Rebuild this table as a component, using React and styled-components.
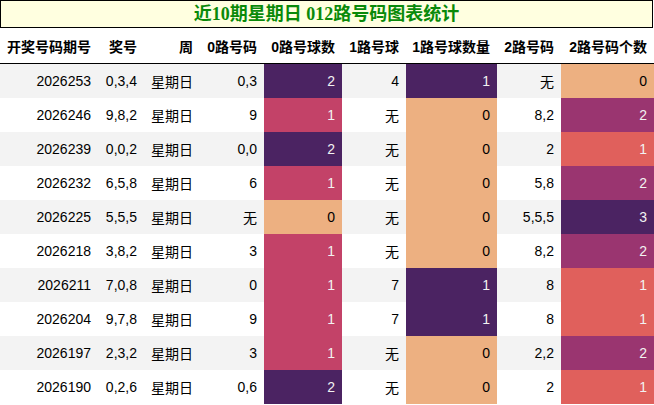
import React from 'react';
import styled, { createGlobalStyle } from 'styled-components';

const GlobalStyle = createGlobalStyle`
  html, body {
    margin: 0;
    padding: 0;
    background: #fff;
  }
  body {
    font-family: 'Liberation Sans', 'Noto Sans CJK SC', sans-serif;
    font-size: 14px;
    color: #000;
  }
`;

const COLUMNS = '98px 46px 56px 64px 78px 64px 91px 64px 93px';

// flare-like ramp, light orange -> dark purple
const RAMP = {
  0: '#edb081',
  0.33: '#e0605c',
  0.5: '#c34268',
  0.67: '#9a3570',
  1: '#4b2362',
};

const shade = (value, max) => {
  const t = Math.round((value / max) * 100) / 100;
  return RAMP[t];
};

const Page = styled.div`
  width: 654px;
  height: 405px;
  overflow: hidden;
`;

const Title = styled.div`
  box-sizing: border-box;
  width: 653px;
  height: 28px;
  border: 1px solid #000;
  background: #ffffe0;
  color: #0a8a0a;
  font-family: 'Liberation Serif', 'Noto Sans CJK SC', serif;
  font-weight: bold;
  font-size: 18px;
  line-height: 26px;
  text-align: center;
`;

const Row = styled.div`
  display: grid;
  grid-template-columns: ${COLUMNS};
  height: ${(props) => (props.head ? '35px' : '34px')};
  background: ${(props) => (props.striped ? '#f3f3f3' : '#fff')};
  border-bottom: ${(props) => (props.head ? '1px solid #000' : 'none')};
  font-weight: ${(props) => (props.head ? 'bold' : 'normal')};
`;

const Cell = styled.div`
  display: flex;
  align-items: center;
  justify-content: flex-end;
  padding: 0 7px;
  white-space: nowrap;
  background: ${(props) => props.bg || 'transparent'};
  color: ${(props) => (props.light ? '#f2f2f2' : '#000')};
`;

const HEADERS = [
  '开奖号码期号',
  '奖号',
  '周',
  '0路号码',
  '0路号球数',
  '1路号球',
  '1路号球数量',
  '2路号码',
  '2路号码个数',
];

const ROWS = [
  ['2026253', '0,3,4', '0,3', 2, '4', 1, '无', 0],
  ['2026246', '9,8,2', '9', 1, '无', 0, '8,2', 2],
  ['2026239', '0,0,2', '0,0', 2, '无', 0, '2', 1],
  ['2026232', '6,5,8', '6', 1, '无', 0, '5,8', 2],
  ['2026225', '5,5,5', '无', 0, '无', 0, '5,5,5', 3],
  ['2026218', '3,8,2', '3', 1, '无', 0, '8,2', 2],
  ['2026211', '7,0,8', '0', 1, '7', 1, '8', 1],
  ['2026204', '9,7,8', '9', 1, '7', 1, '8', 1],
  ['2026197', '2,3,2', '3', 1, '无', 0, '2,2', 2],
  ['2026190', '0,2,6', '0,6', 2, '无', 0, '2', 1],
];

const CountCell = ({ value, max }) => (
  <Cell bg={shade(value, max)} light={value > 0}>
    {value}
  </Cell>
);

const App = () => (
  <Page>
    <GlobalStyle />
    <Title>近10期星期日 012路号码图表统计</Title>
    <Row head>
      {HEADERS.map((h) => (
        <Cell key={h}>{h}</Cell>
      ))}
    </Row>
    {ROWS.map(([issue, nums, zero, zeroCount, one, oneCount, two, twoCount], i) => (
      <Row key={issue} striped={i % 2 === 0}>
        <Cell>{issue}</Cell>
        <Cell>{nums}</Cell>
        <Cell>星期日</Cell>
        <Cell>{zero}</Cell>
        <CountCell value={zeroCount} max={2} />
        <Cell>{one}</Cell>
        <CountCell value={oneCount} max={1} />
        <Cell>{two}</Cell>
        <CountCell value={twoCount} max={3} />
      </Row>
    ))}
  </Page>
);

export default App;
